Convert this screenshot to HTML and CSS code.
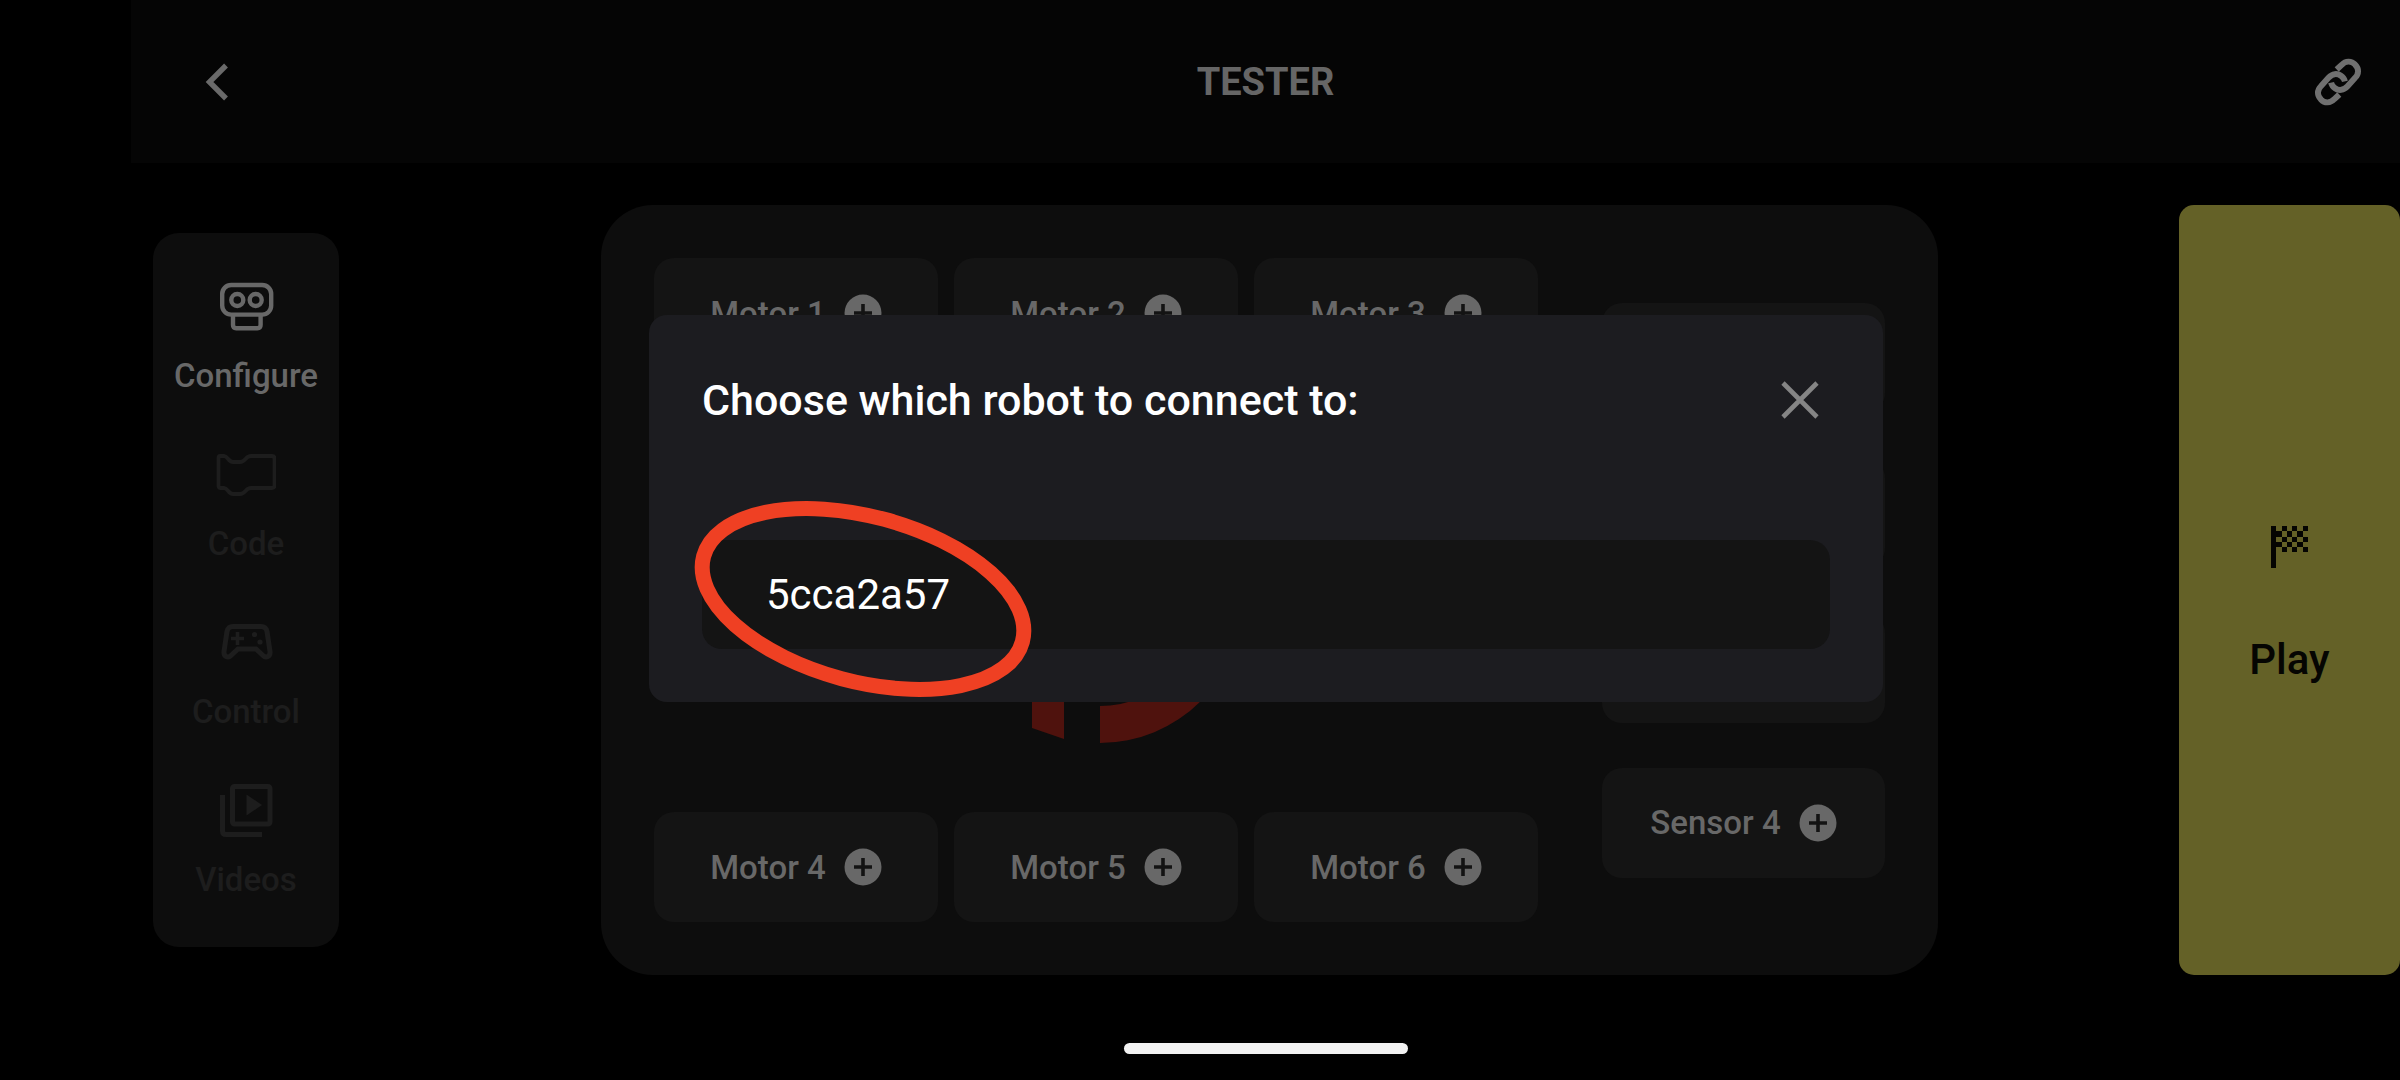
FILE: index.html
```html
<!DOCTYPE html>
<html lang="en">
<head>
<meta charset="utf-8">
<meta name="viewport" content="width=device-width, initial-scale=1">
<title>Tester</title>
<link rel="stylesheet" href="styles.css">
</head>
<body>
<svg class="defs" aria-hidden="true">
  <symbol id="plus" viewBox="0 0 38 38">
    <circle cx="19" cy="19" r="18.5" fill="#686868"/>
    <path d="M19 10v18M10 19h18" stroke="#131313" stroke-width="3.6"/>
  </symbol>
</svg>
<div class="app">
  <header class="topbar">
    <button class="icon-button" aria-label="Back">
      <svg width="24" height="38" viewBox="0 0 24 38" fill="none" stroke="#6a6a6a" stroke-width="5.4"><path d="M21 2.500 4.500 19 21 35.500"/></svg>
    </button>
    <h1 class="topbar-title">TESTER</h1>
    <button class="icon-button" aria-label="Connection">
      <svg width="48" height="48" viewBox="160 114 146 146" fill="none" stroke="#707070" stroke-width="18">
        <path id="loop" d="M229 149 244 135C256 122 274 122 285 134 297 146 297 162 285 174L262 200C250 213 235 214 224 206 218 202 214 198 212 189"/>
        <use href="#loop" transform="rotate(180 233 187)"/>
      </svg>
    </button>
  </header>

  <main class="workspace">
    <nav class="sidebar" aria-label="Sections">
      <a class="nav-item active" href="#configure">
        <svg class="nav-icon" viewBox="0 0 60 60" fill="none" stroke="currentColor" stroke-width="4.4">
          <rect x="6.2" y="9" width="49" height="29.6" rx="9"/>
          <circle cx="21.3" cy="24" r="6"/><circle cx="39.7" cy="24" r="6"/>
          <path d="M17 39v10q0 3.200 3.200 3.200h21.200q3.200 0 3.200-3.200V39"/>
        </svg>
        <span>Configure</span>
      </a>
      <a class="nav-item" href="#code">
        <svg class="nav-icon" viewBox="0 0 60 60" fill="none" stroke="currentColor" stroke-width="3.800" stroke-linejoin="round">
          <path d="M4 12h4c4 0 4 6 9 6h7c6 0 5-6 11-6h21q2.500 0 2.500 2.500v27q0 2.500-2.500 2.500H35c-6 0-5 6-11 6h-7c-5 0-5-6-9-6H4q-1.500 0-1.500-2.500v-27Q2.500 12 4 12Z"/>
        </svg>
        <span>Code</span>
      </a>
      <a class="nav-item" href="#control">
        <svg class="nav-icon" viewBox="0 0 60 60" fill="none" stroke="currentColor" stroke-width="5">
          <path d="M17 14.500h28q5 0 6 5l3 20c.5 5-4 7-7 4L40 37H22l-7 6.500c-3 3-7.500 1-7-4l3-20q1-5 6-5Z"/>
          <path d="M21.500 20v13M15 26.500h13" stroke-width="3.600"/>
          <circle cx="38.500" cy="22.500" r="2.600" fill="currentColor" stroke="none"/><circle cx="44" cy="30" r="2.600" fill="currentColor" stroke="none"/>
        </svg>
        <span>Control</span>
      </a>
      <a class="nav-item" href="#videos">
        <svg class="nav-icon" viewBox="0 0 60 60" fill="none" stroke="currentColor" stroke-width="5">
          <rect x="16.500" y="6.500" width="37.500" height="37.500" rx="2"/>
          <path d="M6.500 15v36q0 3.500 3.500 3.500h36"/>
          <path d="M30.500 14.500v21L46 25Z" fill="currentColor" stroke="none"/>
        </svg>
        <span>Videos</span>
      </a>
    </nav>

    <section class="board" aria-label="Ports">
      <div class="motors">
        <div class="motor-row">
          <button class="port">Motor 1<svg class="plus"><use href="#plus"/></svg></button>
          <button class="port">Motor 2<svg class="plus"><use href="#plus"/></svg></button>
          <button class="port">Motor 3<svg class="plus"><use href="#plus"/></svg></button>
        </div>
        <svg class="logo" viewBox="0 0 284 284" fill="#4f120d" aria-hidden="true">
          <path d="M74 16 106 6v274l-32-11Z"/>
          <path d="M142 0a142 142 0 0 1 0 284v-37a105 105 0 0 0 0-210Z"/>
        </svg>
        <div class="motor-row">
          <button class="port">Motor 4<svg class="plus"><use href="#plus"/></svg></button>
          <button class="port">Motor 5<svg class="plus"><use href="#plus"/></svg></button>
          <button class="port">Motor 6<svg class="plus"><use href="#plus"/></svg></button>
        </div>
      </div>
      <div class="sensors">
        <button class="port">Sensor 1<svg class="plus"><use href="#plus"/></svg></button>
        <button class="port">Sensor 2<svg class="plus"><use href="#plus"/></svg></button>
        <button class="port">Sensor 3<svg class="plus"><use href="#plus"/></svg></button>
        <button class="port">Sensor 4<svg class="plus"><use href="#plus"/></svg></button>
      </div>
    </section>

    <button class="play">
      <svg width="37" height="42" viewBox="0 0 7 8" fill="#050502" shape-rendering="crispEdges" aria-hidden="true">
        <path d="M0 0h1v8H0ZM2 0h1v1H2ZM4 0h1v1H4ZM6 0h1v1H6ZM1 1h1v1H1ZM3 1h1v1H3ZM5 1h1v1H5ZM2 2h1v1H2ZM4 2h1v1H4ZM6 2h1v1H6ZM1 3h1v1H1ZM3 3h1v1H3ZM5 3h1v1H5ZM2 4h1v1H2ZM4 4h1v1H4ZM6 4h1v1H6Z"/>
      </svg>
      <span>Play</span>
    </button>
  </main>

  <div class="home-indicator"></div>
</div>

<div class="overlay">
  <section class="dialog" role="dialog" aria-modal="true" aria-labelledby="dialog-title">
    <div class="dialog-head">
      <h2 class="dialog-title" id="dialog-title">Choose which robot to connect to:</h2>
      <button class="icon-button" aria-label="Close">
        <svg width="38" height="38" viewBox="0 0 38 38" stroke="#858585" stroke-width="4.600"><path d="m2 2 34 34M36 2 2 36"/></svg>
      </button>
    </div>
    <button class="robot">5cca2a57
      <svg class="marker" viewBox="0 0 340 200" fill="none" stroke="#ef4023" stroke-width="15" aria-hidden="true">
        <ellipse cx="170" cy="100" rx="165" ry="82.500" transform="rotate(15 170 100)"/>
      </svg>
    </button>
  </section>
</div>
</body>
</html>
```
FILE: styles.css
```css
* {
  box-sizing: border-box;
}

body {
  margin: 0;
  background: #000;
  color: #686868;
  font-family: Roboto, "Liberation Sans", sans-serif;
  font-size: 33px;
  font-weight: 500;
}

button {
  border: 0;
  background: none;
  color: inherit;
  font: inherit;
  padding: 0;
  cursor: pointer;
}

h1,
h2 {
  margin: 0;
}

svg {
  display: block;
}

.defs {
  position: absolute;
  width: 0;
  height: 0;
}

.app {
  display: flex;
  flex-direction: column;
  min-height: 100vh;
  padding-left: 131px;
}

.topbar {
  display: grid;
  grid-template-columns: 1fr auto 1fr;
  align-items: center;
  height: 163px;
  padding: 0 32px 0 56px;
  background: #050505;
}

.topbar .icon-button:last-child {
  justify-self: end;
}

.topbar-title {
  padding-right: 24px;
  color: #666;
  font-size: 38px;
  font-weight: 700;
  line-height: 48px;
}

.icon-button {
  display: grid;
  place-items: center;
  width: 60px;
  height: 60px;
}

.workspace {
  display: grid;
  grid-template-columns: 186px 1fr 221px;
  flex: 1;
  align-items: center;
  padding: 42px 0 0 22px;
}

.sidebar {
  display: grid;
  gap: 48px;
  padding: 43px 0 47px;
  border-radius: 26px;
  background: #0d0d0d;
}

.nav-item {
  display: grid;
  justify-items: center;
  gap: 20px;
  color: #1d1d1d;
  line-height: 40px;
  text-decoration: none;
}

.nav-item.active {
  color: #686868;
}

.nav-icon {
  width: 60px;
  height: 60px;
}

.board {
  display: grid;
  grid-template-columns: 1fr 283px;
  align-self: stretch;
  gap: 64px;
  margin: 0 241px 0 262px;
  padding: 53px;
  border-radius: 52px;
  background: #0d0d0d;
}

.motors {
  display: flex;
  flex-direction: column;
  align-items: center;
  justify-content: space-between;
}

.motor-row {
  display: grid;
  grid-template-columns: repeat(3, 1fr);
  gap: 16px;
  width: 100%;
}

.logo {
  width: 284px;
  height: 284px;
  margin: 22px 0 0 8px;
}

.sensors {
  display: flex;
  flex-direction: column;
  justify-content: center;
  gap: 45px;
}

.port {
  display: flex;
  align-items: center;
  justify-content: center;
  gap: 18px;
  height: 110px;
  border-radius: 20px;
  background: #141414;
}

.plus {
  width: 38px;
  height: 38px;
}

.play {
  display: flex;
  flex-direction: column;
  align-items: center;
  justify-content: center;
  align-self: stretch;
  gap: 64px;
  padding-top: 34px;
  border-radius: 15px;
  background: #646127;
  color: #050502;
  font-size: 42px;
  line-height: 56px;
}

.home-indicator {
  align-self: center;
  width: 284px;
  height: 11px;
  margin: 68px 0 26px;
  border-radius: 6px;
  background: #f2f2f2;
}

.overlay {
  position: fixed;
  inset: 0;
  display: grid;
  place-items: center;
  padding: 0 0 64px 132px;
}

.dialog {
  width: 90%;
  max-width: 1234px;
  padding: 53px;
  border-radius: 18px;
  background: #1c1c20;
}

.dialog-head {
  display: flex;
  align-items: center;
  justify-content: space-between;
  height: 64px;
  margin-bottom: 108px;
}

.dialog-title {
  color: #fff;
  font-size: 43px;
  font-weight: 500;
  line-height: 56px;
}

.robot {
  position: relative;
  width: 100%;
  height: 109px;
  padding: 0 64px;
  border-radius: 20px;
  background: #141414;
  color: #fff;
  font-size: 42px;
  font-weight: 400;
  text-align: left;
}

.marker {
  position: absolute;
  top: -41px;
  left: -9px;
  width: 340px;
  height: 200px;
  overflow: visible;
}
```
